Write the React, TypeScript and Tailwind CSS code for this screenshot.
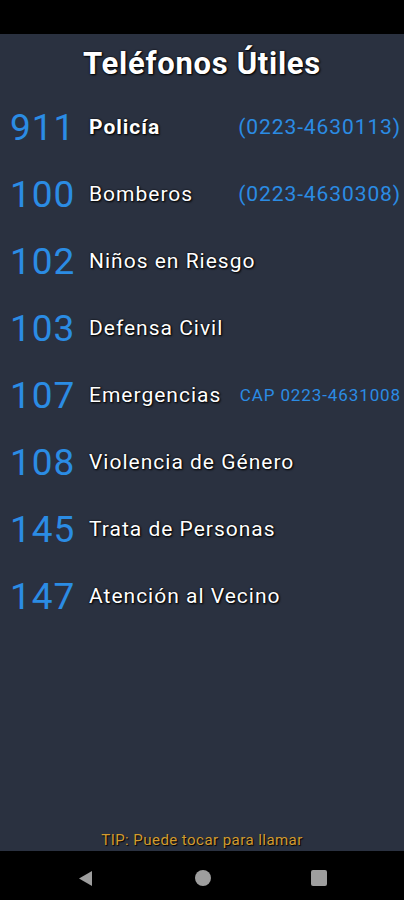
import React from "react";

const rows: { num: string; label: string; phone?: string; small?: boolean; bold?: boolean }[] = [
  { num: "911", label: "Policía", phone: "(0223-4630113)", bold: true },
  { num: "100", label: "Bomberos", phone: "(0223-4630308)" },
  { num: "102", label: "Niños en Riesgo" },
  { num: "103", label: "Defensa Civil" },
  { num: "107", label: "Emergencias", phone: "CAP 0223-4631008", small: true },
  { num: "108", label: "Violencia de Género" },
  { num: "145", label: "Trata de Personas" },
  { num: "147", label: "Atención al Vecino" },
];

export default function App() {
  return (
    <div
      className="w-[404px] h-[900px] flex flex-col bg-[#2a3140] overflow-hidden"
      style={{ fontFamily: "Roboto, 'Liberation Sans', sans-serif" }}
    >
      <div className="h-[34px] bg-black shrink-0" />
      <div className="flex-1 flex flex-col">
        <div className="h-[60px] flex items-center justify-center">
          <h1 className="text-[31px] font-bold tracking-[0.7px] text-white [text-shadow:0_0_2px_#000,1px_1px_2px_#000]">
            Teléfonos Útiles
          </h1>
        </div>
        <div className="flex flex-col">
          {rows.map((r) => (
            <div key={r.num} className="h-[67px] flex items-center">
              <div className="w-[89px] pl-[10px] text-[37px] tracking-[1px] leading-none text-[#2b8ce4] shrink-0">
                {r.num}
              </div>
              <div
                className={`flex-1 text-[21px] tracking-[1px] text-white [text-shadow:0_0_2px_#000,1px_1px_2px_#000] ${
                  r.bold ? "font-bold tracking-[0.6px]" : ""
                }`}
              >
                {r.label}
              </div>
              {r.phone && (
                <div
                  className={`pr-[3px] text-[#2b8ce4] ${
                    r.small ? "text-[17px] tracking-[0.9px]" : "text-[21px] tracking-[0.9px]"
                  }`}
                >
                  {r.phone}
                </div>
              )}
            </div>
          ))}
        </div>
        <div className="flex-1" />
        <div className="h-[22px] flex items-start justify-center">
          <span className="text-[15px] tracking-[0.45px] text-[#d39b2e] [text-shadow:1px_1px_1px_#000]">
            TIP: Puede tocar para llamar
          </span>
        </div>
      </div>
      <div className="h-[49px] bg-black shrink-0 flex items-center">
        <div className="w-[404px] relative h-full flex items-center">
          <svg className="absolute left-[77px] top-[19px]" width="17" height="17" viewBox="0 0 17 17">
            <path d="M15 1 L15 16 L2 8.5 Z" fill="#9e9e9e" />
          </svg>
          <div className="absolute left-[195px] top-[19px] w-[16px] h-[16px] rounded-full bg-[#9e9e9e]" />
          <div className="absolute left-[311px] top-[19px] w-[16px] h-[16px] rounded-[2px] bg-[#9e9e9e]" />
        </div>
      </div>
    </div>
  );
}
